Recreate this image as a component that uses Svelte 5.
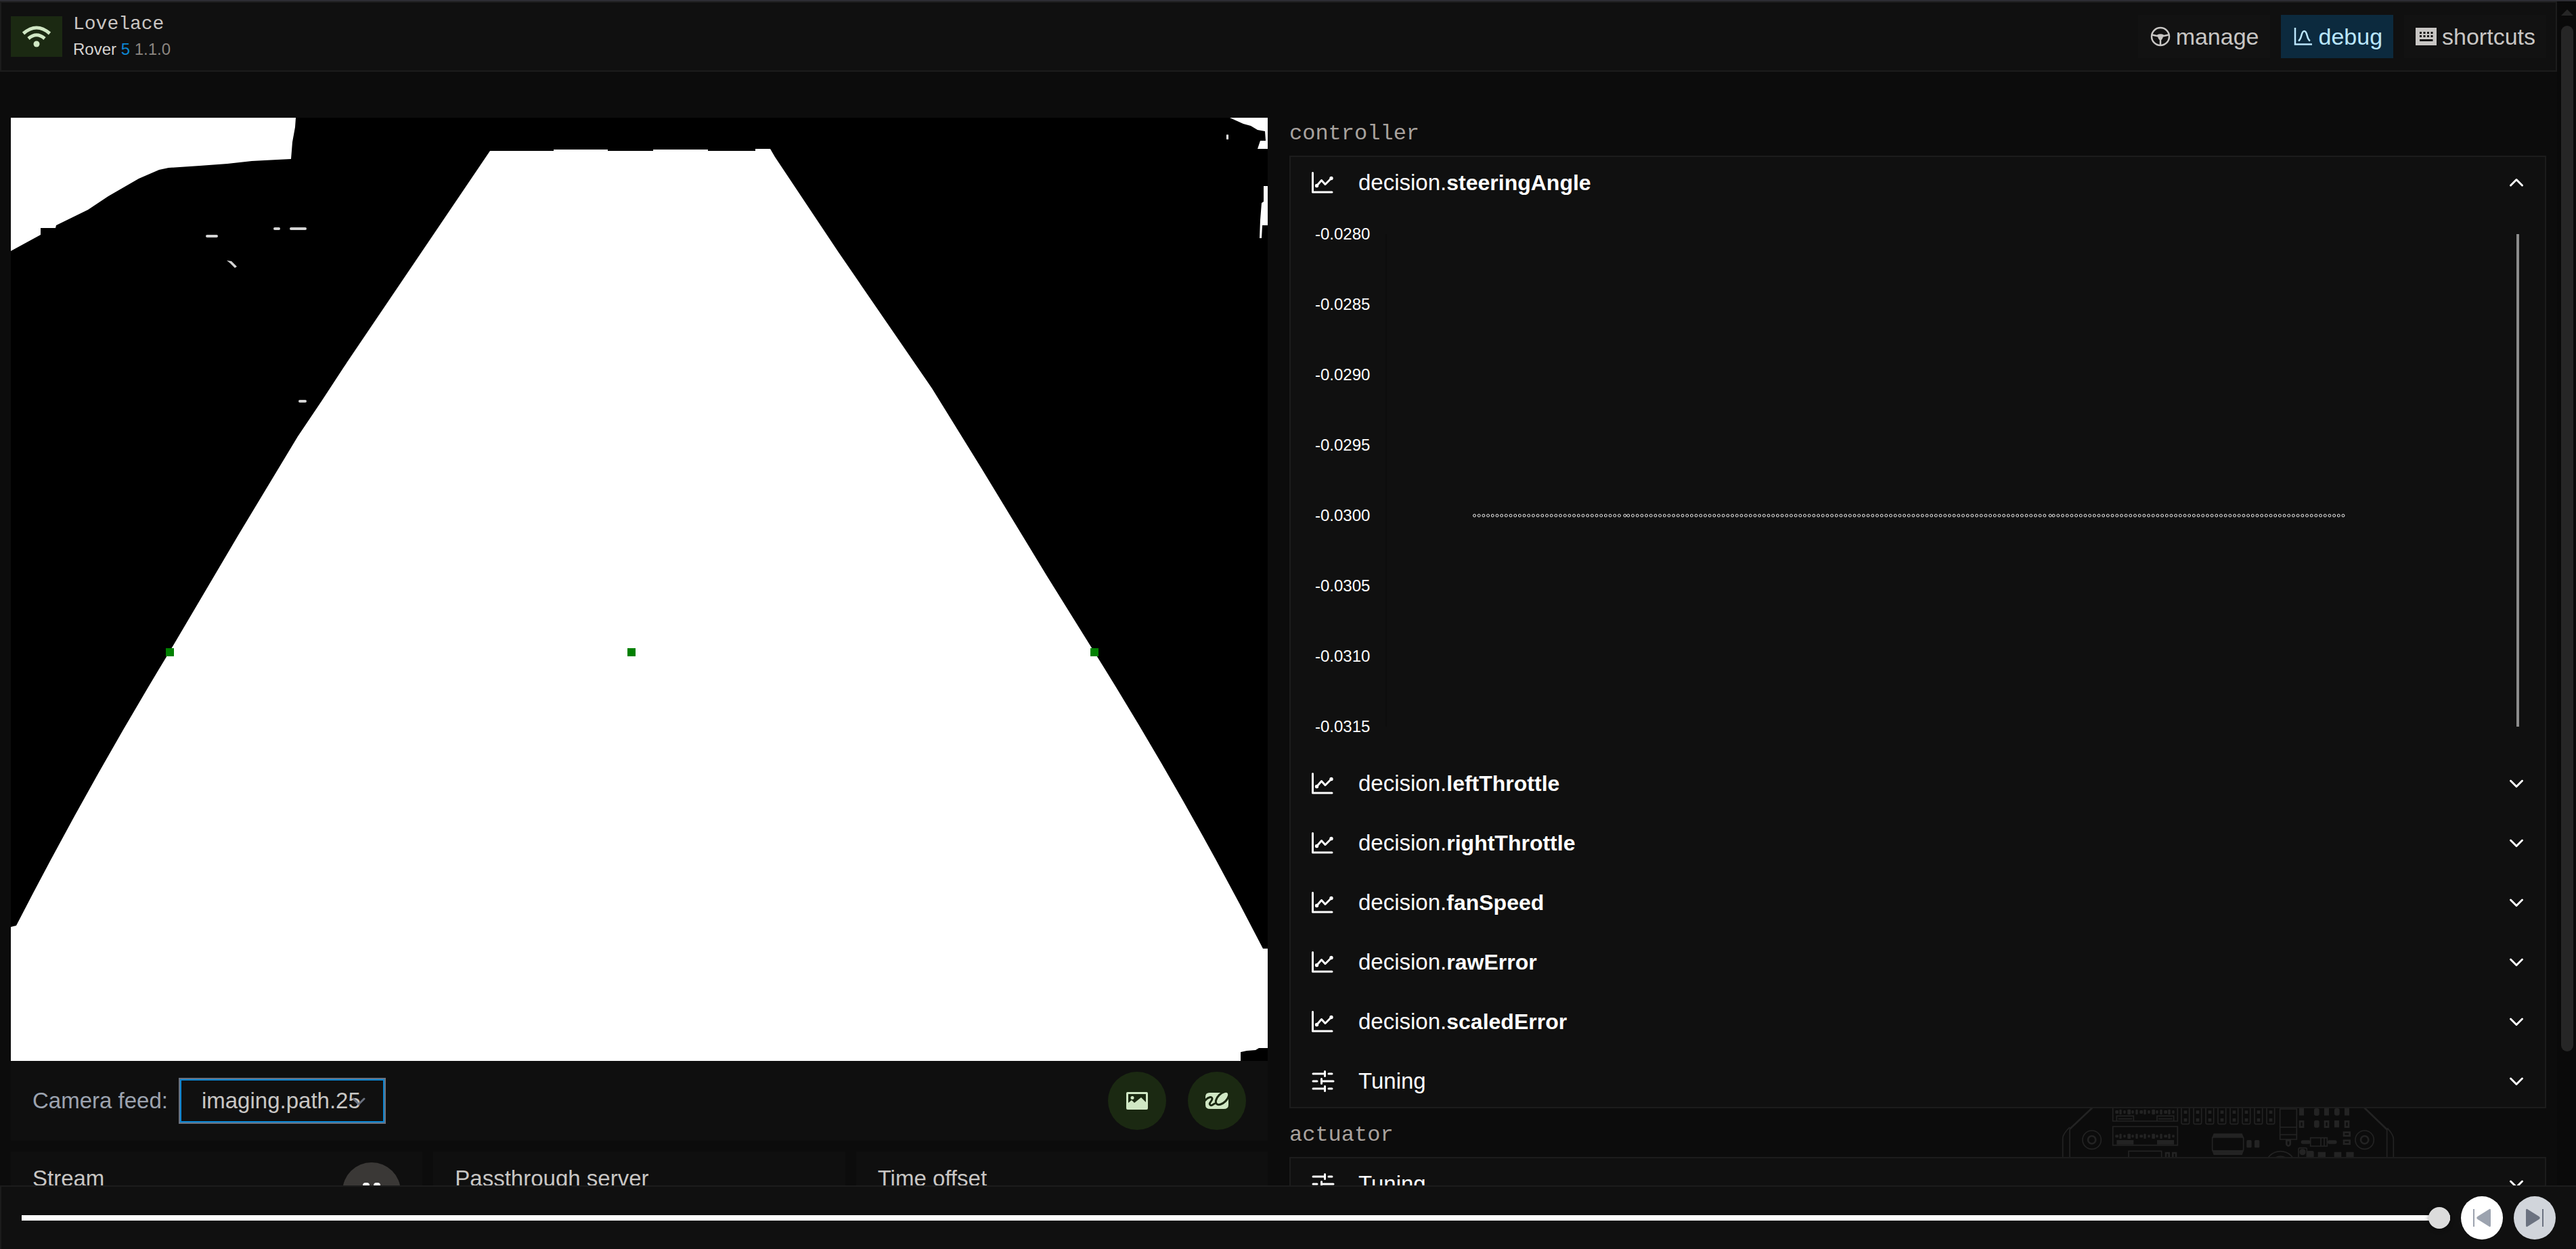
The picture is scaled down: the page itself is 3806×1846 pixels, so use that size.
<script>
  const nav = [
    { id: 'manage', active: false },
    { id: 'debug', active: true },
    { id: 'shortcuts', active: false },
  ];

  const series = ['leftThrottle', 'rightThrottle', 'fanSpeed', 'rawError', 'scaledError'];
  const ticks = ['-0.0280', '-0.0285', '-0.0290', '-0.0295', '-0.0300', '-0.0305', '-0.0310', '-0.0315'];

  // Sample positions along the time axis, in percent of the plot width.
  const count = 193;
  const samples = Array.from({ length: count }, (_, i) => {
    const late = i === 33 || i === 127 ? 0.1 : 0;
    return 7.76 + (i * 76.9) / (count - 1) + late;
  });

  const pins = [0, 1, 2, 3, 4, 5, 6, 7];
  const teeth = Array.from({ length: 15 }, (_, i) => i);

  let feed = $state('imaging.path.25');
  let position = $state(100);
</script>

{#snippet chartIcon()}
  <svg class="icon" viewBox="0 0 32 32" aria-hidden="true">
    <path d="M2.500 1.500V30H31" />
    <path d="M8.500 20.500L15.500 12.500L21 18.500L30 9.500" />
    <circle cx="8.500" cy="20.500" r="1.200" />
    <circle cx="30" cy="9.500" r="1.200" />
  </svg>
{/snippet}

{#snippet tuneIcon()}
  <svg class="icon" viewBox="0 0 32 32" aria-hidden="true">
    <path d="M3 5H20M20.500 1.500V8.500M26 5H31M3 16H9M15.500 12.500V19.500M16 16H33M3 27H20M20.500 23.500V30.500M26 27H31" />
  </svg>
{/snippet}

{#snippet chevron(up)}
  <svg class="chevron" viewBox="0 0 28 28" aria-hidden="true">
    <path d={up ? 'M5.500 18L14 9.500L22.500 18' : 'M5.500 10L14 18.500L22.500 10'} />
  </svg>
{/snippet}

<div class="app">
  <div class="viewport">
    <div class="page">
      <header>
        <button class="wifi" aria-label="Connection">
          <svg viewBox="0 0 44 32" aria-hidden="true">
            <path d="M2.500 11.500Q22 -5.500 41.500 11.500" />
            <path d="M10 19Q22 8.500 34 19" />
            <circle cx="22" cy="27" r="4.500" />
          </svg>
        </button>
        <div class="title">
          <div class="name">Lovelace</div>
          <div class="model">Rover <span class="num">5</span> <span class="ver">1.1.0</span></div>
        </div>
        <nav>
          {#each nav as item}
            <button class="tab" class:active={item.active}>
              <svg viewBox="0 0 32 32" aria-hidden="true">
                {#if item.id === 'manage'}
                  <circle class="line" cx="17" cy="16" r="13" />
                  <path class="line" d="M4.500 13.500L14 15.500M29.500 13.500L20 15.500M17 18V29" />
                  <path d="M12 13.500Q17 11 22 13.500L20 19L18.500 21H15.500L14 19Z" />
                {:else if item.id === 'debug'}
                  <path class="line" d="M5 3V27.500H30" />
                  <path class="line" d="M10 22.500C15.500 19 13.500 8 18.500 8S21.500 19 27 22.500" />
                {:else}
                  <path fill-rule="evenodd" d="M1 3H32V29H1ZM7 9V12H10V9ZM12.500 9V12H15.500V9ZM18 9V12H21V9ZM23.500 9V12H26.500V9ZM7 14V17H10V14ZM12.500 14V17H15.500V14ZM18 14V17H21V14ZM23.500 14V17H26.500V14ZM7 20V23H26.500V20Z" />
                {/if}
              </svg>
              {item.id}
            </button>
          {/each}
        </nav>
      </header>

      <main>
        <section class="left">
          <svg class="video" viewBox="16 174 1857 1394" role="img" aria-label="Camera frame">
            <rect x="16" y="174" width="1857" height="1394" fill="#000" />
            <g fill="#fff">
              <path d="M16 174H437L436 188L432 210L430 235L410 236L372 238L336 242L295 245L249 248L235 251L205 264L160 290L130 310L83 333L82 337H60V347L16 371Z" />
              <path d="M724 223H818V221H898V223H965V221H1046V223H1116V220H1138L1145 232L1239 373L1377 574L1450 692L1546 850L1617 964Q1752 1180 1866 1402H1873V1549H1860L1855 1552L1842 1553L1833 1555V1568H16V1370L24 1368Q131 1160 250 964L352 791L440 645L475 593L513 535L724 223Z" />
              <path d="M1817 174L1837 183L1848 186L1858 192L1869 194L1870 208H1862L1858 220H1873V174Z" />
              <path d="M1867 275H1873V333H1865L1864 352H1861L1862 325L1864 300L1867 298Z" />
              <rect x="1812" y="199" width="3" height="7" />
              <g fill="#d4d4d4">
                <rect x="304" y="347" width="18" height="4" rx="2" />
                <rect x="404" y="336" width="10" height="4" rx="2" />
                <rect x="428" y="336" width="25" height="4" rx="2" />
                <rect x="441" y="591" width="12" height="4" rx="2" />
                <path d="M335 385L342 386L350 394L347 396L340 389Z" />
              </g>
            </g>
            <g fill="#008000">
              <rect x="245" y="958" width="12" height="12" />
              <rect x="927" y="958" width="12" height="12" />
              <rect x="1611" y="958" width="12" height="12" />
            </g>
          </svg>

          <div class="feed card">
            <label for="feed">Camera feed:</label>
            <div class="select">
              <select id="feed" bind:value={feed}>
                <option>imaging.path.25</option>
              </select>
              <svg viewBox="0 0 20 14" aria-hidden="true"><path d="M2 3L10 11L18 3" /></svg>
            </div>
            <div class="tools">
              <button class="round" aria-label="Snapshot">
                <svg viewBox="0 0 36 36" aria-hidden="true">
                  <path fill-rule="evenodd" d="M4 5H32Q34 5 34 7V29Q34 31 32 31H4Q2 31 2 29V7Q2 5 4 5ZM5 8V21L10 17L14 21L24 13L31 20V8Z" />
                  <circle cx="11" cy="13.500" r="2.500" />
                </svg>
              </button>
              <button class="round" aria-label="Draw">
                <svg viewBox="0 0 36 36" aria-hidden="true">
                  <path d="M7 6H29Q35 8 35 14V24Q35 30 28 30H8Q1 30 1 24V12Q1 6 7 6Z" />
                  <path class="cut" d="M0 18C5 12 11 11 11 15S5 21 8 24S13 21 16 22" />
                  <ellipse class="pen" cx="26" cy="14" rx="12" ry="6.500" transform="rotate(-45 26 14)" />
                </svg>
              </button>
            </div>
          </div>

          <div class="stats">
            <div class="card stat">
              <span>Stream</span>
              <button class="round pause" aria-label="Pause">
                <svg viewBox="0 0 36 36" aria-hidden="true"><rect x="5" y="5" width="10" height="26" rx="4" /><rect x="21" y="5" width="10" height="26" rx="4" /></svg>
              </button>
            </div>
            <div class="card stat"><span>Passthrough server</span></div>
            <div class="card stat"><span>Time offset</span></div>
          </div>
        </section>

        <section class="right">
          <h2>controller</h2>
          <div class="panel">
            <button class="row">
              {@render chartIcon()}
              <span>decision.<b>steeringAngle</b></span>
              {@render chevron(true)}
            </button>
            <div class="chart">
              <div class="ticks">
                {#each ticks as t}<span>{t}</span>{/each}
              </div>
              <svg class="plot" aria-hidden="true">
                {#each samples as x}
                  <circle cx="{x}%" cy="57.143%" r="2" />
                {/each}
              </svg>
            </div>
            {#each series as s}
              <button class="row">
                {@render chartIcon()}
                <span>decision.<b>{s}</b></span>
                {@render chevron(false)}
              </button>
            {/each}
            <button class="row">
              {@render tuneIcon()}
              <span>Tuning</span>
              {@render chevron(false)}
            </button>
          </div>

          <div class="between">
            <h2>actuator</h2>
            <svg class="board" viewBox="0 24 1560 216" aria-hidden="true">
              <path class="thick" d="M186 20L84 116M1388 20L1492 120" />
              <path d="M84 108Q53 138 53 158V250M84 116V250M1490 116V250M1492 112Q1519 142 1519 160V250" />
              <circle cx="182" cy="164" r="41" />
              <circle class="thick" cx="182" cy="164" r="17" />
              <circle cx="1391" cy="164" r="41" />
              <circle class="thick" cx="1391" cy="164" r="17" />
              <path d="M275 20V81H562V20M275 105H562V188H275ZM292 81V58H367V81M471 81V58H545V81M345 250V214H491V250" />
              <path d="M299 71H361M477 71H539" />
              <g class="fill">
                <rect x="292" y="165" width="75" height="20" />
                <rect x="471" y="165" width="75" height="20" />
                {#each teeth as t}
                  <rect x={286 + t * 18} y={t % 2 ? 29 : 33} width={t % 3 ? 10 : 14} height={t % 2 ? 23 : 15} rx="4" />
                  <rect x={286 + t * 18} y={t % 2 ? 137 : 142} width={t % 3 ? 10 : 14} height={t % 2 ? 22 : 12} rx="3" />
                {/each}
                {#each pins as p}
                  <rect x={590 + p * 54} y="34" width="14" height="14" />
                  <rect x={590 + p * 54} y="69" width="14" height="14" />
                {/each}
                <path d="M722 136H848L856 155H714ZM714 210H856L848 231H722Z" />
                <rect x="868" y="165" width="22" height="34" rx="5" />
                <rect x="903" y="165" width="22" height="34" rx="5" />
                <rect x="1101" y="24" width="21" height="32" />
                <rect x="1167" y="24" width="23" height="33" rx="8" />
                <rect x="1212" y="24" width="21" height="32" />
                <rect x="1257" y="24" width="23" height="32" rx="8" />
                <rect x="1302" y="24" width="21" height="32" />
                <rect x="1167" y="77" width="23" height="33" rx="8" />
                <rect x="1257" y="78" width="21" height="31" />
                <rect x="1109" y="166" width="42" height="16" rx="8" />
                <rect x="1226" y="166" width="42" height="16" rx="8" />
                <circle cx="1116" cy="218" r="14" />
                <rect x="1134" y="213" width="32" height="30" rx="6" />
                <rect x="1184" y="218" width="34" height="24" />
                <rect x="1256" y="218" width="32" height="24" />
                <rect x="1309" y="218" width="34" height="24" />
              </g>
              {#each pins as p}
                <path d="M{579 + p * 54} 20V88Q{579 + p * 54} 94 {585 + p * 54} 94H{608 + p * 54}Q{614 + p * 54} 94 {614 + p * 54} 88V20" />
              {/each}
              <rect x="716" y="150" width="138" height="64" rx="8" />
              <path d="M1016 27H1090V162H1016ZM1016 108H1090M1016 141H1090" />
              <path class="thick" d="M1045 166H1061V184Q1053 198 1045 184Z" />
              <path class="thick" d="M1104 82H1119V107H1104ZM1215 82H1230V107H1215ZM1305 82H1320V107H1305ZM1299 131H1325V146H1299ZM1299 167H1325V182H1299ZM510 222H524V250H510ZM541 222H555V250H541Z" />
              <path d="M1151 155H1225V192H1151ZM1197 155V192M1212 155V192" />
              <path d="M1098 250V206Q1098 200 1104 200H1129Q1135 200 1135 206V250" />
              <circle cx="1018" cy="282" r="67" />
              <circle cx="1018" cy="282" r="45" />
            </svg>
          </div>
          <div class="panel">
            <button class="row">
              {@render tuneIcon()}
              <span>Tuning</span>
              {@render chevron(false)}
            </button>
          </div>
        </section>
      </main>
    </div>

    <div class="scrollbar" aria-hidden="true">
      <svg viewBox="0 0 18 9"><path d="M9 0L18 9H0Z" /></svg>
      <div class="thumb"></div>
    </div>
  </div>

  <footer>
    <input type="range" min="0" max="100" bind:value={position} aria-label="Playback position" />
    <button class="step" aria-label="Previous frame">
      <svg viewBox="0 0 28 28" aria-hidden="true">
        <path class="bar" d="M2 1V27" />
        <path d="M25 1Q27 0 27 3V25Q27 28 25 27L7.500 16Q5 14 7.500 12Z" />
      </svg>
    </button>
    <button class="step next" aria-label="Next frame">
      <svg viewBox="0 0 28 28" aria-hidden="true">
        <path class="bar" d="M26 1V27" />
        <path d="M3 1Q1 0 1 3V25Q1 28 3 27L20.500 16Q23 14 20.500 12Z" />
      </svg>
    </button>
  </footer>
</div>

<style>
  :global(body) {
    background: #0c0c0c;
    overflow: hidden;
  }

  .app,
  .app * {
    box-sizing: border-box;
  }

  .app {
    height: 100vh;
    display: flex;
    flex-direction: column;
    border-top: 2px solid #2d2d33;
    font-family: "Liberation Sans", Arial, sans-serif;
    font-size: 33px;
    line-height: 48px;
    color: #c8c6c4;
  }

  button {
    font: inherit;
    color: inherit;
    border: 0;
    padding: 0;
    background: none;
  }

  .viewport {
    flex: 1;
    min-height: 0;
    display: flex;
    overflow: hidden;
  }

  .page {
    flex: 1;
    min-width: 0;
  }

  header {
    display: flex;
    align-items: center;
    height: 104px;
    padding: 0 14px;
    background: #101010;
    border: 2px solid #1c1c1c;
  }

  .wifi {
    display: flex;
    align-items: center;
    justify-content: center;
    width: 76px;
    height: 60px;
    background: #1b2912;
  }

  .wifi svg {
    width: 44px;
    height: 32px;
    fill: none;
    stroke: #d0e7c4;
    stroke-width: 5px;
  }

  .wifi circle {
    fill: #d0e7c4;
    stroke: none;
  }

  .title {
    margin-left: 16px;
    flex: 1;
    color: #d6d3d1;
  }

  .name {
    font-family: "Liberation Mono", monospace;
    font-size: 28px;
    line-height: 38px;
    color: #c9c5c2;
  }

  .model {
    font-size: 24px;
    line-height: 36px;
  }

  .num {
    color: #0c87d4;
  }

  .ver {
    color: #8c8681;
  }

  nav {
    display: flex;
    gap: 16px;
    font-size: 34px;
  }

  .tab {
    display: flex;
    align-items: center;
    gap: 8px;
    height: 64px;
    padding: 0 16px;
    background: #121212;
  }

  .tab svg {
    width: 32px;
    height: 32px;
    fill: currentColor;
  }

  .tab .line {
    fill: none;
    stroke: currentColor;
    stroke-width: 2.5px;
  }

  .tab.active {
    background: #0c2a3e;
    color: #bae6fd;
  }

  main {
    display: grid;
    grid-template-columns: 1fr 1fr;
    gap: 32px;
    padding: 68px 16px 0;
  }

  .left,
  .right {
    min-width: 0;
  }

  .video {
    display: block;
    width: 100%;
  }

  .card {
    background: #0f0f0f;
  }

  .feed {
    display: flex;
    align-items: center;
    height: 118px;
    padding: 0 32px;
  }

  .feed label {
    color: #9ca3af;
    margin-right: 16px;
  }

  .select {
    position: relative;
    width: 306px;
  }

  select {
    appearance: none;
    display: block;
    width: 100%;
    height: 68px;
    padding: 0 0 0 32px;
    border: 2px solid #6b7280;
    border-radius: 0;
    outline: none;
    box-shadow: inset 0 0 0 2px #0c87d4;
    background: #101010;
    color: #c8c6c4;
    font: inherit;
  }

  .select svg {
    position: absolute;
    right: 30px;
    top: 28px;
    width: 20px;
    height: 14px;
    fill: none;
    stroke: #6b7280;
    stroke-width: 3px;
    stroke-linecap: round;
    pointer-events: none;
  }

  .tools {
    display: flex;
    gap: 32px;
    margin-left: auto;
  }

  .round {
    display: flex;
    align-items: center;
    justify-content: center;
    width: 86px;
    height: 86px;
    border-radius: 50%;
    background: #1b2912;
  }

  .round svg {
    width: 36px;
    height: 36px;
    fill: #d0e7c4;
  }

  .round .cut {
    fill: none;
    stroke: #1b2912;
    stroke-width: 3px;
  }

  .round .pen {
    stroke: #1b2912;
    stroke-width: 3px;
  }

  .pause {
    background: #3a3836;
  }

  .pause svg {
    fill: #fff;
  }

  .stats {
    display: grid;
    grid-template-columns: repeat(3, 1fr);
    gap: 16px;
    margin-top: 16px;
  }

  .stat {
    display: flex;
    justify-content: space-between;
    padding: 16px 32px;
  }

  h2 {
    margin: 0;
    padding-bottom: 8px;
    font-family: "Liberation Mono", monospace;
    font-size: 32px;
    font-weight: 400;
    line-height: 48px;
    color: #a8a29e;
  }

  .panel {
    display: flex;
    flex-direction: column;
    gap: 12px;
    background: #101010;
    border: 2px solid #1c1c1c;
  }

  .row {
    display: flex;
    align-items: center;
    height: 76px;
    padding: 0 28px 0 30px;
    color: #fff;
    text-align: left;
  }

  .row span {
    flex: 1;
    margin-left: 38px;
  }

  .row b {
    font-size: 32px;
  }

  .icon {
    width: 32px;
    height: 32px;
    overflow: visible;
    fill: none;
    stroke: #fff;
    stroke-width: 3px;
    stroke-linecap: round;
    stroke-linejoin: round;
  }

  .chevron {
    width: 28px;
    height: 28px;
    fill: none;
    stroke: #fff;
    stroke-width: 3px;
    stroke-linecap: round;
    stroke-linejoin: round;
  }

  .chart {
    display: flex;
    height: 800px;
    margin-top: -12px;
    padding: 26px 38px 22px 36px;
  }

  .ticks {
    display: flex;
    flex-direction: column;
    justify-content: space-between;
    width: 104px;
    font-size: 24px;
    line-height: 24px;
    color: #fff;
  }

  .plot {
    flex: 1;
    min-width: 0;
    height: 728px;
    margin: 12px 0;
    border-left: 2px solid #0d0d0d;
    border-right: 4px solid #8c8c8c;
  }

  .plot circle {
    fill: #101010;
    stroke: #f0f0f0;
    stroke-width: 1px;
  }

  .between {
    display: flex;
    align-items: flex-end;
    justify-content: space-between;
    height: 72px;
  }

  .board {
    width: 520px;
    height: 72px;
    margin-right: 212px;
    fill: none;
    stroke: #232323;
    stroke-width: 5px;
  }

  .board .thick {
    stroke-width: 8px;
  }

  .board .fill {
    fill: #232323;
    stroke: none;
  }

  .scrollbar {
    display: flex;
    flex-direction: column;
    width: 28px;
    padding: 12px 4px 198px 6px;
    background: #0a0a0a;
  }

  .scrollbar svg {
    width: 18px;
    height: 9px;
    fill: #262626;
  }

  .thumb {
    flex: 1;
    margin-top: 15px;
    border-radius: 9px;
    background: #262626;
  }

  footer {
    display: flex;
    align-items: center;
    gap: 16px;
    height: 94px;
    padding: 0 30px;
    background: #101010;
    border-top: 2px solid #1c1c1c;
    border-left: 2px solid #1c1c1c;
  }

  input[type="range"] {
    appearance: none;
    flex: 1;
    min-width: 0;
    height: 8px;
    margin: 0;
    background: #fff;
  }

  input[type="range"]::-webkit-slider-thumb {
    appearance: none;
    width: 32px;
    height: 32px;
    border-radius: 50%;
    background: #dcdcdc;
    box-shadow: 0 2px 6px rgba(0, 0, 0, 0.4);
  }

  .step {
    display: flex;
    align-items: center;
    justify-content: center;
    width: 62px;
    height: 64px;
    border-radius: 50%;
    background: #fff;
    color: #9ca3af;
  }

  .step.next {
    background: #d1d5db;
    color: #6b7280;
  }

  .step svg {
    width: 28px;
    height: 28px;
    fill: currentColor;
  }

  .bar {
    stroke: currentColor;
    stroke-width: 2px;
  }
</style>
